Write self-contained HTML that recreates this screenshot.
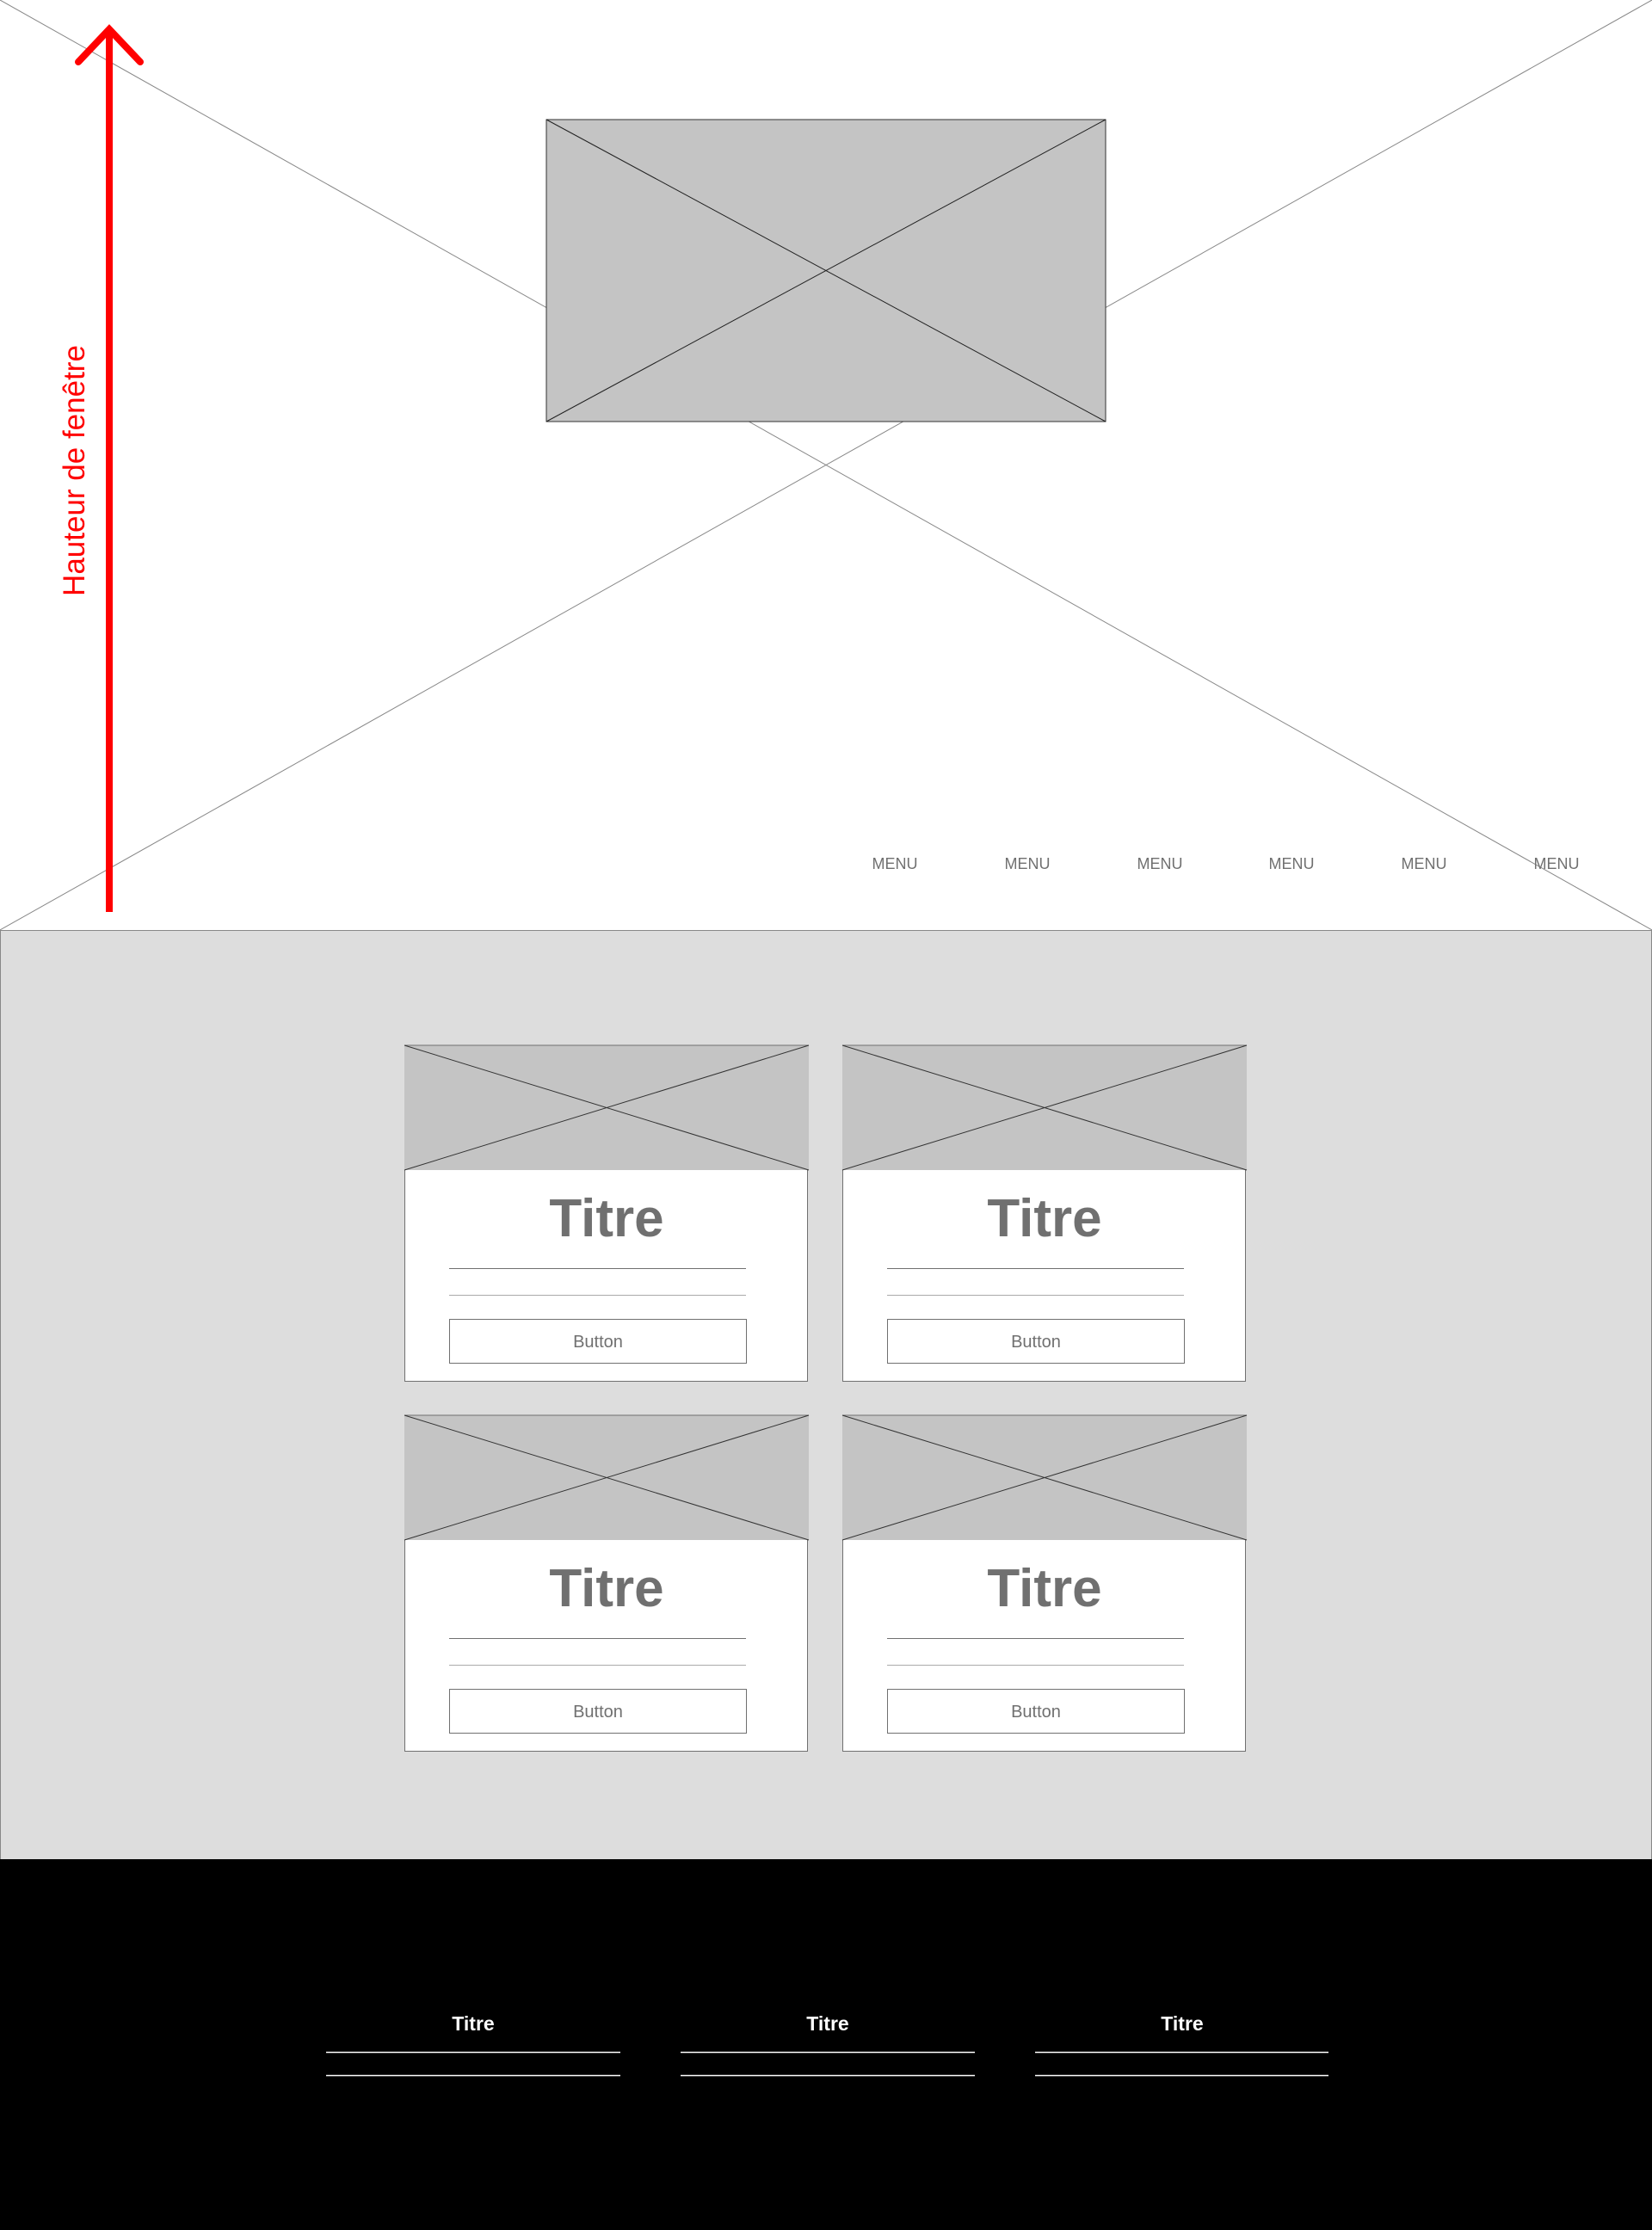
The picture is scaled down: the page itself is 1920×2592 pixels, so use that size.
<!DOCTYPE html>
<html><head><meta charset="utf-8"><style>
html,body{margin:0;padding:0;width:1920px;height:2592px;overflow:hidden;background:#fff}
svg{display:block}
</style></head><body>
<svg width="1920" height="2592" viewBox="0 0 1920 2592" xmlns="http://www.w3.org/2000/svg">
<rect x="0" y="0" width="1920" height="1081" fill="#fff"/>
<line x1="0" y1="0" x2="1920" y2="1081" stroke="#888" stroke-width="1"/>
<line x1="1920" y1="0" x2="0" y2="1081" stroke="#888" stroke-width="1"/>
<rect x="635" y="139" width="650" height="351" fill="#c4c4c4" stroke="#333" stroke-width="1"/>
<line x1="635" y1="139" x2="1285" y2="490" stroke="#222" stroke-width="1"/>
<line x1="1285" y1="139" x2="635" y2="490" stroke="#222" stroke-width="1"/>
<g font-family="Liberation Sans, sans-serif" font-size="18" fill="#707070" text-anchor="middle">
<text x="1040" y="1010">MENU</text><text x="1194" y="1010">MENU</text><text x="1348" y="1010">MENU</text>
<text x="1501" y="1010">MENU</text><text x="1655" y="1010">MENU</text><text x="1809" y="1010">MENU</text>
</g>
<line x1="127" y1="34" x2="127" y2="1060" stroke="#f00" stroke-width="8"/>
<polyline points="91,72 127,34 163,72" fill="none" stroke="#f00" stroke-width="8" stroke-linecap="round" stroke-linejoin="miter"/>
<text transform="translate(98,547) rotate(-90)" text-anchor="middle" font-family="Liberation Sans, sans-serif" font-size="35" fill="#f00">Hauteur de fenêtre</text>
<rect x="0.5" y="1081.5" width="1919" height="1080" fill="#dddddd" stroke="#888" stroke-width="1"/>
<g id="c">
<rect x="470.5" y="1215.5" width="468" height="390" fill="#fff" stroke="#707070"/>
<rect x="470" y="1215" width="470" height="145" fill="#c4c4c4"/>
<line x1="470" y1="1215" x2="940" y2="1215" stroke="#707070"/>
<line x1="470" y1="1215" x2="940" y2="1360" stroke="#333"/>
<line x1="940" y1="1215" x2="470" y2="1360" stroke="#333"/>
<text x="705" y="1437" text-anchor="middle" font-family="Liberation Sans, sans-serif" font-weight="bold" font-size="62" fill="#707070">Titre</text>
<line x1="522" y1="1474.5" x2="867" y2="1474.5" stroke="#707070"/>
<line x1="522" y1="1505.5" x2="867" y2="1505.5" stroke="#aaa"/>
<rect x="522.5" y="1533.5" width="345" height="51" fill="#fff" stroke="#707070"/>
<text x="695" y="1566" text-anchor="middle" font-family="Liberation Sans, sans-serif" font-size="20" fill="#707070">Button</text>
</g>
<use href="#c" x="509" y="0"/>
<use href="#c" x="0" y="430"/>
<use href="#c" x="509" y="430"/>
<rect x="0" y="2161" width="1920" height="431" fill="#000"/>
<g font-family="Liberation Sans, sans-serif" font-weight="bold" font-size="23" fill="#fff" text-anchor="middle">
<text x="550" y="2360">Titre</text><text x="962" y="2360">Titre</text><text x="1374" y="2360">Titre</text>
</g>
<g stroke="#fff" stroke-width="1.5">
<line x1="379" y1="2385.5" x2="721" y2="2385.5"/><line x1="379" y1="2412.5" x2="721" y2="2412.5"/>
<line x1="791" y1="2385.5" x2="1133" y2="2385.5"/><line x1="791" y1="2412.5" x2="1133" y2="2412.5"/>
<line x1="1203" y1="2385.5" x2="1544" y2="2385.5"/><line x1="1203" y1="2412.5" x2="1544" y2="2412.5"/>
</g>
</svg>
</body></html>
